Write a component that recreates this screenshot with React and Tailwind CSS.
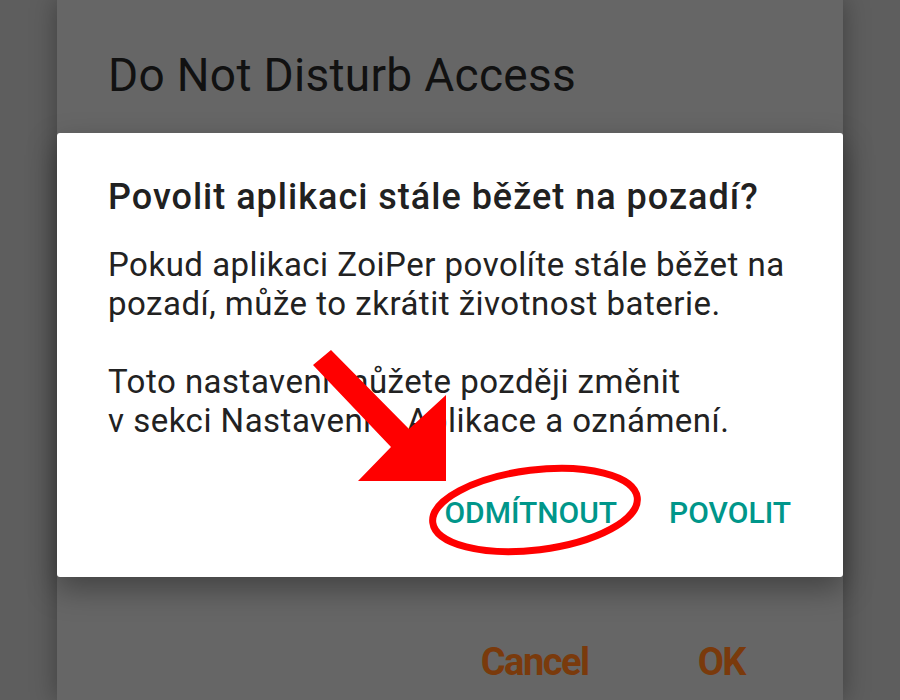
import React from "react";

export default function App() {
  return (
    <div
      className="relative w-[900px] h-[700px] overflow-hidden bg-[#5e5e5e] flex justify-center"
      style={{ fontFamily: "Roboto, 'Noto Sans', sans-serif" }}
    >
      {/* underlying dimmed dialog */}
      <div className="w-[786px] h-full bg-[#666666] shadow-[0_0_24px_rgba(0,0,0,0.35)] flex flex-col">
        <div className="pl-[51px] pt-[45px] text-[46px] leading-[60px] text-[#111111] tracking-[0.3px]">
          Do Not Disturb Access
        </div>
        <div className="mt-auto mb-[8px] flex justify-end pr-[98px] gap-[109px] h-[60px] items-center">
          <span className="text-[38px] font-bold text-[#7a3a0c] tracking-[-1.5px]">Cancel</span>
          <span className="text-[38px] font-bold text-[#7a3a0c] tracking-[-1.5px]">OK</span>
        </div>
      </div>

      {/* foreground dialog */}
      <div className="absolute left-[57px] top-[133px] w-[786px] h-[444px] bg-white rounded-[3px] shadow-[0_12px_30px_rgba(0,0,0,0.35)] flex flex-col pl-[51px] pr-[40px]">
        <div className="pt-[42px] text-[36px] leading-[44px] font-medium text-[#212121] tracking-[1px] whitespace-nowrap">
          Povolit aplikaci stále běžet na pozadí?
        </div>
        <div className="mt-[26px] text-[33px] leading-[39px] text-[#222222] tracking-[0.5px] whitespace-nowrap">
          <p>Pokud aplikaci ZoiPer povolíte stále běžet na</p>
          <p>pozadí, může to zkrátit životnost baterie.</p>
          <p className="mt-[39px]">Toto nastavení můžete později změnit</p>
          <p>v sekci Nastavení &gt; Aplikace a oznámení.</p>
        </div>
        <div className="mt-auto mb-[42px] flex justify-end items-center gap-[52px] pr-[12px]">
          <span className="text-[30px] font-medium text-[#00968a]">ODMÍTNOUT</span>
          <span className="text-[30px] font-medium text-[#00968a]">POVOLIT</span>
        </div>
      </div>

      {/* red annotation overlay */}
      <svg className="absolute left-0 top-0" width="900" height="700" viewBox="0 0 900 700">
        <polygon
          points="331,350 409,429 446,395 446,481 358,481 391,447 313,365"
          fill="#ff0000"
        />
        <ellipse
          cx="535"
          cy="510"
          rx="103"
          ry="40"
          transform="rotate(-7 535 510)"
          fill="none"
          stroke="#ff0000"
          strokeWidth="7"
        />
      </svg>
    </div>
  );
}
